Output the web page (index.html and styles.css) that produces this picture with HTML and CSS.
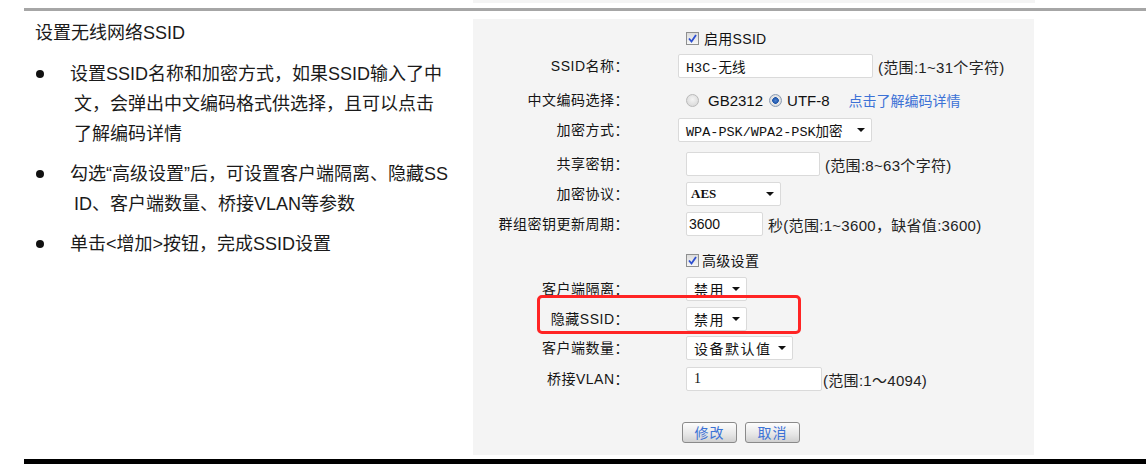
FILE: index.html
```html
<!DOCTYPE html>
<html lang="zh-CN">
<head>
  <meta charset="UTF-8">
  <title>设置无线网络SSID</title>
  <link rel="stylesheet" href="styles.css">
</head>
<body>
  <div class="page">
    <div class="top-strip"></div>
    <div class="rule"></div>

    <div class="content">
      <!-- Left: notes -->
      <div class="notes">
        <h2 class="notes-title">设置无线网络SSID</h2>
        <ul class="notes-list">
          <li><span class="dot"></span><p>设置SSID名称和加密方式，如果SSID输入了中<br>文，会弹出中文编码格式供选择，且可以点击<br>了解编码详情</p></li>
          <li><span class="dot"></span><p>勾选“高级设置”后，可设置客户端隔离、隐藏SS<br>ID、客户端数量、桥接VLAN等参数</p></li>
          <li><span class="dot"></span><p>单击&lt;增加&gt;按钮，完成SSID设置</p></li>
        </ul>
      </div>

      <!-- Right: SSID form -->
      <div class="panel">
        <div class="row">
          <span class="label"></span>
          <div class="value">
            <span class="checkbox"><svg width="13" height="13" viewBox="0 0 13 13"><path d="M3 6.5 L5.5 9.5 L10 3" fill="none" stroke="#2d4fd0" stroke-width="1.8"/></svg></span>
            <span class="check-text">启用SSID</span>
          </div>
        </div>

        <div class="row sp-4">
          <span class="label">SSID名称：</span>
          <div class="value">
            <input class="field mono shift w-195" value="H3C-无线" readonly>
            <span class="hint">(范围:1~31个字符)</span>
          </div>
        </div>

        <div class="row sp-10">
          <span class="label">中文编码选择：</span>
          <div class="value">
            <span class="radio"></span>
            <span class="radio-text">GB2312</span>
            <span class="radio on"></span>
            <span class="radio-text">UTF-8</span>
            <a class="link" href="#">点击了解编码详情</a>
          </div>
        </div>

        <div class="row sp-6">
          <span class="label">加密方式：</span>
          <div class="value">
            <div class="select mono shift w-194"><span>WPA-PSK/WPA2-PSK加密</span><i class="arrow"></i></div>
          </div>
        </div>

        <div class="row sp-10">
          <span class="label">共享密钥：</span>
          <div class="value">
            <input class="field w-134" value="" readonly>
            <span class="hint">(范围:8~63个字符)</span>
          </div>
        </div>

        <div class="row sp-6">
          <span class="label">加密协议：</span>
          <div class="value">
            <div class="select serif w-95 pad-4"><span>AES</span><i class="arrow"></i></div>
          </div>
        </div>

        <div class="row sp-6">
          <span class="label">群组密钥更新周期：</span>
          <div class="value">
            <input class="field sans pad-2 w-77" value="3600" readonly>
            <span class="hint">秒(范围:1~3600，缺省值:3600)</span>
          </div>
        </div>

        <div class="row sp-12">
          <span class="label"></span>
          <div class="value">
            <span class="checkbox"><svg width="13" height="13" viewBox="0 0 13 13"><path d="M3 6.5 L5.5 9.5 L10 3" fill="none" stroke="#2d4fd0" stroke-width="1.8"/></svg></span>
            <span class="check-text tight">高级设置</span>
          </div>
        </div>

        <div class="row sp-5">
          <span class="label">客户端隔离：</span>
          <div class="value">
            <div class="select cjk w-61"><span>禁用</span><i class="arrow"></i></div>
          </div>
        </div>

        <div class="row sp-6">
          <span class="label">隐藏SSID：</span>
          <div class="value">
            <div class="select cjk w-61"><span>禁用</span><i class="arrow"></i></div>
          </div>
        </div>

        <div class="row sp-5">
          <span class="label">客户端数量：</span>
          <div class="value">
            <div class="select cjk w-107"><span>设备默认值</span><i class="arrow"></i></div>
          </div>
        </div>

        <div class="row sp-7">
          <span class="label">桥接VLAN：</span>
          <div class="value">
            <input class="field serif w-136" value="1" readonly>
            <span class="hint near">(范围:1～4094)</span>
          </div>
        </div>

        <div class="actions">
          <button class="btn">修改</button>
          <button class="btn">取消</button>
        </div>

        <!-- red callout around the hidden SSID row -->
        <div class="highlight"></div>
      </div>
    </div>

    <div class="bottom-bar"></div>
  </div>
</body>
</html>
```

FILE: styles.css
```css
body { margin: 0; background: #fff; color: #1a1a1a; font-family: "Liberation Sans", "Noto Sans CJK SC", sans-serif; }
.page { margin-left: 24px; }
.top-strip { margin-left: 449px; width: 562px; height: 3px; background: #f4f4f4; }
.rule { margin-top: 5px; height: 3px; background: #a6a6a6; }
.content { display: flex; height: 448px; }
.bottom-bar { height: 5px; background: #000; }

/* notes column */
.notes { width: 449px; padding: 7px 0 0 11px; box-sizing: border-box; }
.notes-title { margin: 0; font-size: 18px; font-weight: normal; line-height: 30px; }
.notes-list { list-style: none; margin: 11px 0 0; padding: 0; }
.notes-list li { display: flex; font-size: 18px; line-height: 30px; margin-bottom: 10px; }
.notes-list p { margin: 0 0 0 30px; text-indent: -4px; }
.dot { flex: none; width: 8px; height: 8px; border-radius: 50%; background: #111; margin: 11px 0 0 1px; }

/* form panel */
.panel { position: relative; width: 561px; height: 436px; margin-top: 8px; padding-top: 7px; box-sizing: border-box; background: #f4f4f4; }
.row { display: grid; grid-template-columns: 156px auto; column-gap: 57px; height: 24px; align-items: center; }
.sp-4 { margin-top: 4px; }
.sp-5 { margin-top: 5px; }
.sp-6 { margin-top: 6px; }
.sp-7 { margin-top: 7px; }
.sp-10 { margin-top: 10px; }
.sp-12 { margin-top: 12px; }
.label { text-align: right; font-size: 14px; letter-spacing: 0.5px; color: #151515; line-height: 24px; white-space: nowrap; }
.value { display: flex; align-items: center; height: 24px; white-space: nowrap; }

.field, .select { height: 24px; box-sizing: border-box; border: 1px solid #dadada; border-radius: 2px; background: #fff; padding: 0 0 0 7px; margin: 0; color: #111; font-size: 14px; outline: none; }
.select { display: flex; align-items: center; justify-content: space-between; padding-right: 6px; }
.mono { font-family: "Liberation Mono", "Noto Sans CJK SC", monospace; font-size: 13.5px; }
.serif { font-family: "Liberation Serif", "Noto Sans CJK SC", serif; font-size: 14px; }
.select.serif { font-weight: bold; font-size: 13px; }
.sans { font-family: "Liberation Sans", sans-serif; font-size: 14px; }
.cjk { font-family: "Noto Sans CJK SC", sans-serif; font-size: 14px; letter-spacing: 1.5px; }
.shift { margin-left: -8px; }
.pad-2 { padding-left: 2px; }
.pad-4 { padding-left: 4px; }
.w-61 { width: 61px; }
.w-77 { width: 77px; }
.w-95 { width: 95px; }
.w-107 { width: 107px; }
.w-134 { width: 134px; }
.w-136 { width: 136px; }
.w-194 { width: 194px; }
.w-195 { width: 195px; }
.arrow { width: 0; height: 0; border-left: 4px solid transparent; border-right: 4px solid transparent; border-top: 4px solid #111; }

.hint { margin-left: 5px; font-size: 15px; letter-spacing: 0.3px; color: #222; }
.hint.near { margin-left: 1px; }

.checkbox { display: inline-block; width: 13px; height: 13px; box-sizing: border-box; border: 1px solid #8e8f8f; background: linear-gradient(#dcdcdc, #f6f6f6); }
.checkbox svg { display: block; margin: -1px; }
.check-text { margin-left: 5px; font-size: 14px; letter-spacing: 0.3px; color: #111; }
.check-text.tight { margin-left: 3px; }

.radio { display: inline-block; width: 13px; height: 13px; box-sizing: border-box; border-radius: 50%; border: 1px solid #b9b9b9; background: radial-gradient(circle at 50% 40%, #f4f4f4, #d3d3d3); }
.radio.on { border-color: #8a9bb3; background: radial-gradient(circle, #4a7fd0 0, #1e55a8 3px, #e9e9e9 3.6px, #d6d6d6 6px); margin-left: 6px; }
.radio:first-child { margin-left: 0; }
.radio-text { font-size: 15px; color: #111; margin-left: 9px; }
.radio.on + .radio-text { margin-left: 5px; }
.link { margin-left: 19px; font-size: 14px; color: #3c72d6; text-decoration: none; }

.actions { display: flex; gap: 8px; margin: 31px 0 0 209px; }
.btn { width: 55px; height: 21px; padding: 0; border: 1px solid #8a8a8a; border-radius: 3px; background: linear-gradient(#fdfdfd, #e6e6e6 60%, #d0d0d0); color: #3c72d6; font-family: "Noto Sans CJK SC", sans-serif; font-size: 14px; letter-spacing: 1px; line-height: 19px; }

.highlight { position: absolute; left: 64px; top: 276px; width: 264px; height: 39px; box-sizing: border-box; border: 3px solid #ff2424; border-radius: 5px; }
```
